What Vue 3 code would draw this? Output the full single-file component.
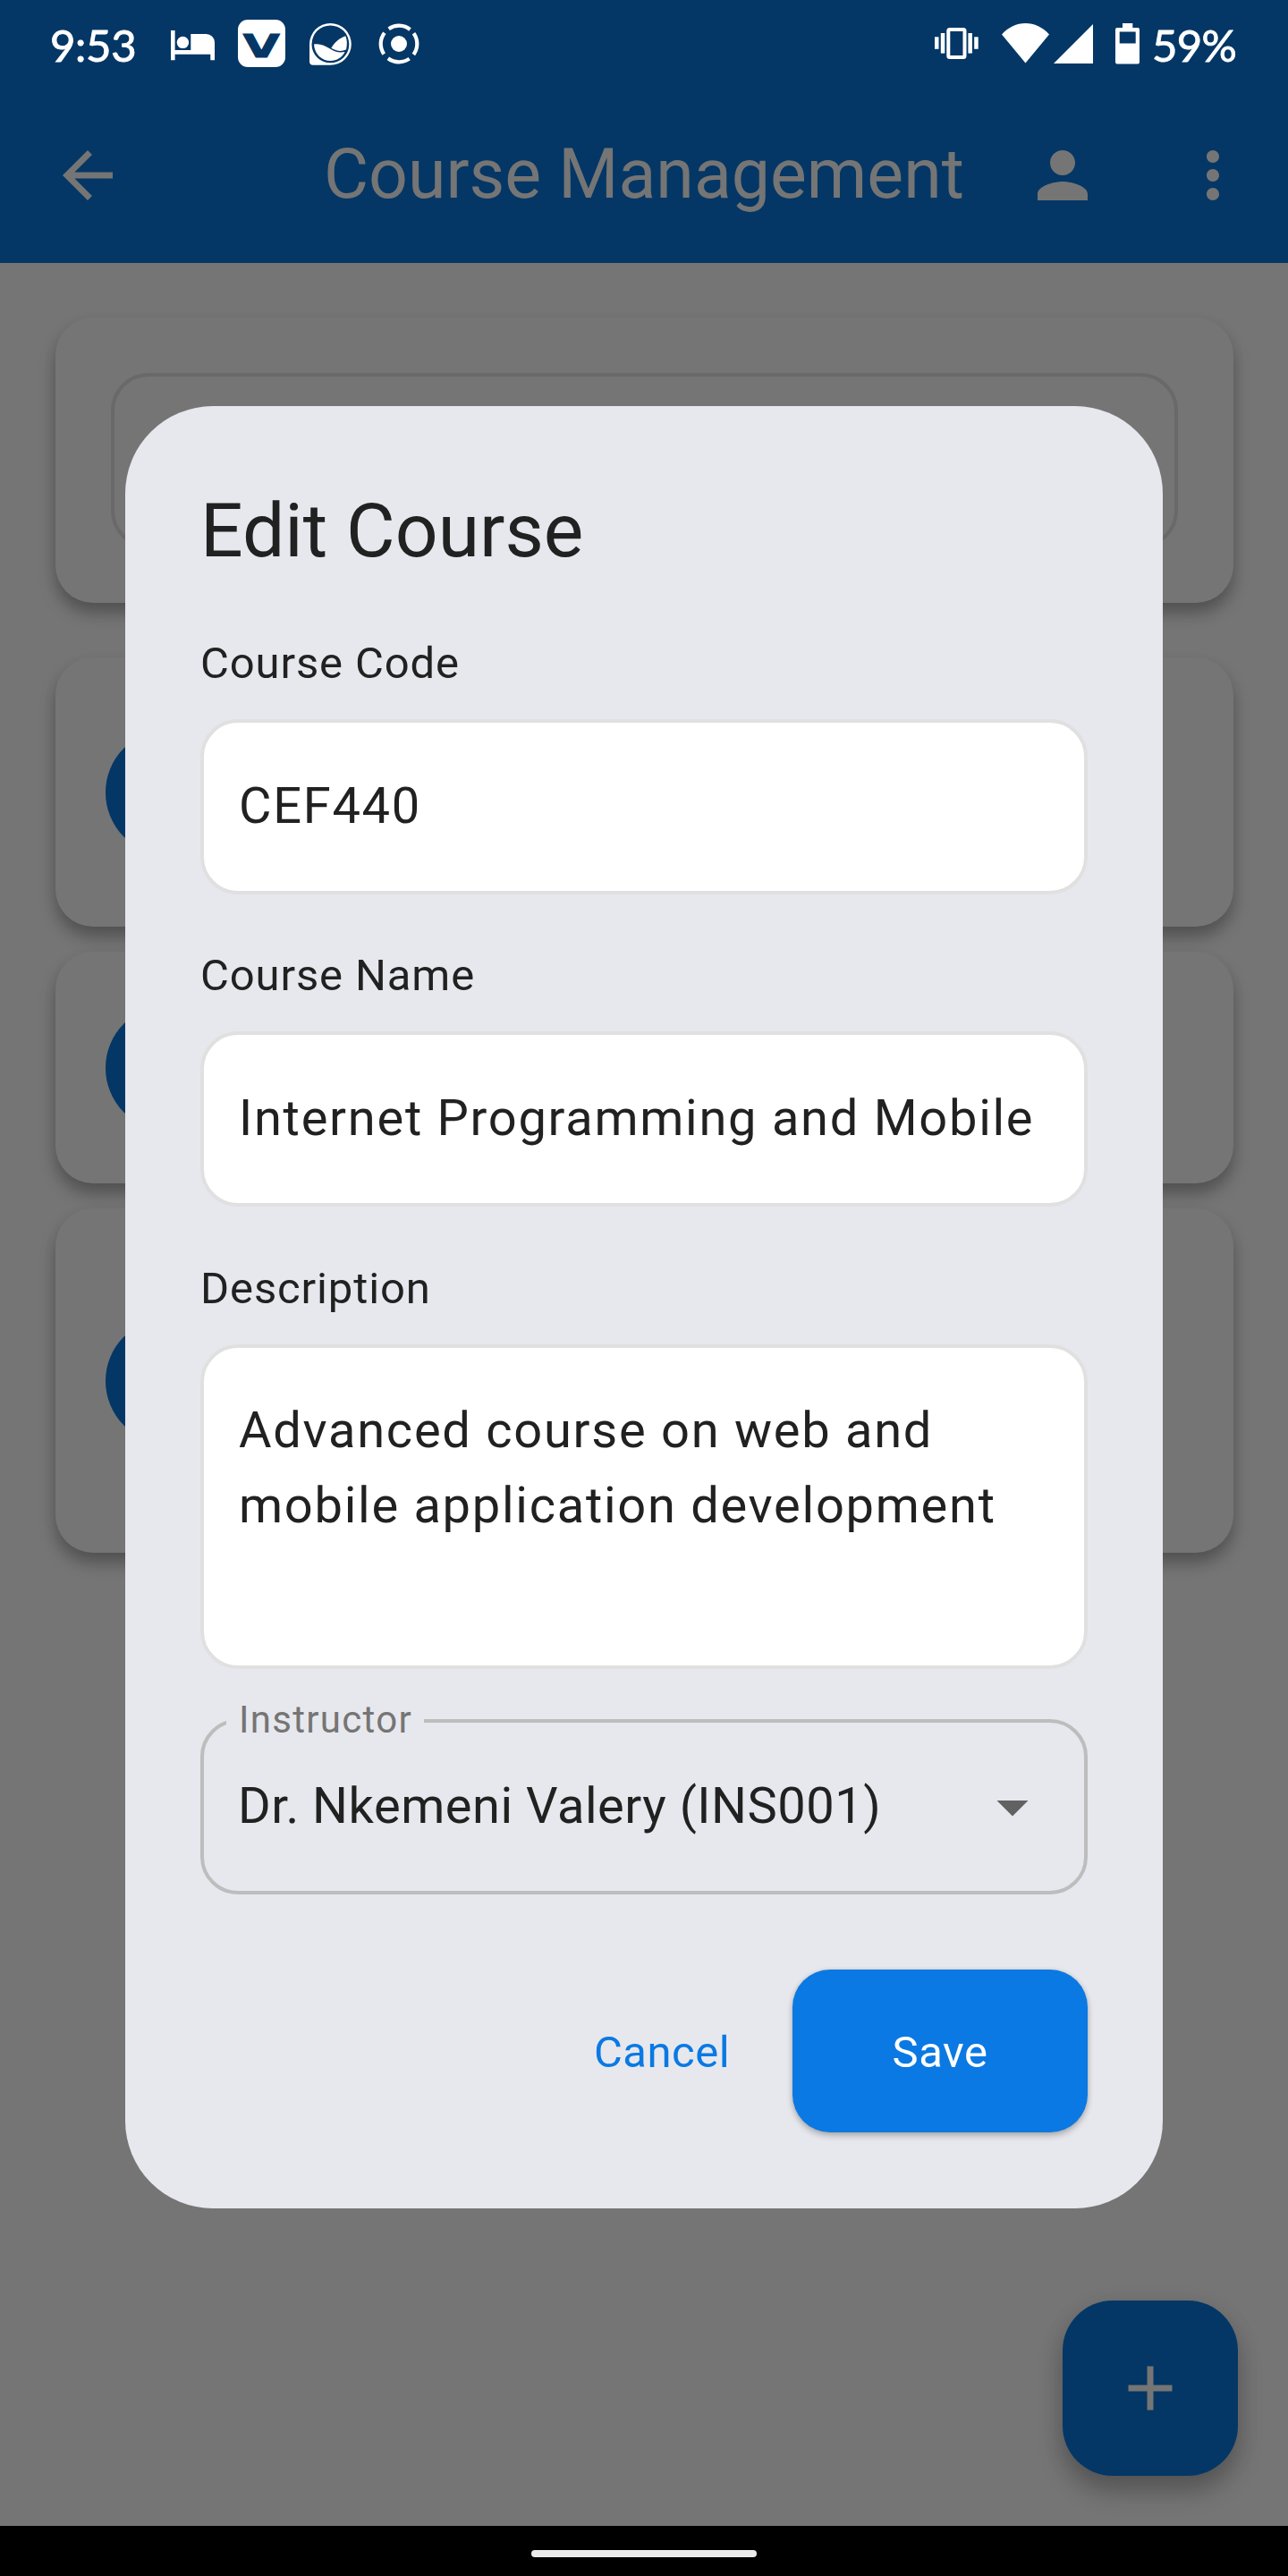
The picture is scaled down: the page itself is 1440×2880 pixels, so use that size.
<script setup>
const courses = [
  { id: 1, size: 'medium' },
  { id: 2, size: 'small' },
  { id: 3, size: 'large' },
]
const fields = [
  { label: 'Course Code', value: 'CEF440' },
  { label: 'Course Name', value: 'Internet Programming and Mobile' },
  { label: 'Description', value: 'Advanced course on web and mobile application development', multiline: true },
]
</script>

<template>
  <div class="screen">
    <header class="top">
      <div class="status">
        <span class="clock">9:53</span>
        <svg class="bed" width="49" height="34" viewBox="0 0 49 34" fill="#fff">
          <path d="M0 0h4.6v22H22.3V4H39.5A9.5 9.5 0 0 1 49 13.5V33.3H44.3V26.7H4.6v6.6H0z" />
          <circle cx="13.4" cy="13.4" r="6.7" />
        </svg>
        <svg class="vapp" width="53" height="53" viewBox="0 0 53 53">
          <rect width="53" height="53" rx="11" fill="#fff" />
          <text x="5.8" y="41.8" font-family="DejaVu Sans" font-weight="700" font-size="36" textLength="41" lengthAdjust="spacingAndGlyphs" fill="#043765" stroke="#043765" stroke-width="1">V</text>
        </svg>
        <svg class="wave" width="47" height="47" viewBox="0 0 47 47">
          <path d="M0 23.4A23.4 23.4 0 1 1 23.4 46.8H4Q0 46.8 0 42.8z" fill="#fff" />
          <circle cx="23.4" cy="23.4" r="20.9" fill="#043765" />
          <path d="M5 23.5C12 22.4 17 25 23 28.6C28.500 32.200 33.500 33.200 39.600 32C36.500 38.200 30.500 42 23.400 42C13.800 42 5.500 34.500 5 23.500z" fill="#fff" />
          <path d="M24.300 27.800C28 21.500 33.500 16.500 40.300 14.300C42.300 19 42.200 24 41 29.500C35.500 32 29.800 31.200 24.300 27.800z" fill="#fff" />
        </svg>
        <svg class="rec" width="46" height="46" viewBox="-23 -23 46 46">
          <circle r="20.300" fill="none" stroke="#fff" stroke-width="4.200" stroke-dasharray="25.200 6.686" transform="rotate(-35.600)" />
          <circle r="9" fill="#fff" />
        </svg>
        <svg class="vibrate" width="49" height="35" viewBox="0 0 49 35" fill="#fff">
          <rect x="15.300" y="2" width="18.200" height="31" rx="1.500" fill="none" stroke="#fff" stroke-width="4" />
          <rect x="0" y="10.300" width="4.500" height="13.500" />
          <rect x="6.800" y="6" width="4.500" height="22.600" />
          <rect x="37.400" y="6" width="4.500" height="22.600" />
          <rect x="44.200" y="10.300" width="4.500" height="13.500" />
        </svg>
        <svg class="wifi" width="53" height="45" viewBox="0 0 53 45" fill="#fff">
          <path d="M26.500 44.500L0 12.500C7.500 4.200 16.500 0 26.500 0S45.500 4.200 53 12.500z" />
        </svg>
        <svg class="signal" width="44" height="44" viewBox="0 0 44 44" fill="#fff"><path d="M0 44H44V0z" /></svg>
        <svg class="battery" width="27" height="46" viewBox="0 0 27 46" fill="#fff">
          <path fill-rule="evenodd" d="M8 0h11.300v5H25q2 0 2 2V43.500q0 2-2 2H2q-2 0-2-2V7q0-2 2-2H8zM4.700 9.400V22.400H22.700V9.400z" />
        </svg>
        <span class="percent">59%</span>
      </div>
      <div class="appbar">
        <svg width="84" height="84" viewBox="0 0 24 24"><path d="M20 11H7.830l5.590-5.590L12 4l-8 8 8 8 1.410-1.410L7.830 13H20v-2z" /></svg>
        <h1>Course Management</h1>
        <svg class="person" width="84" height="84" viewBox="0 0 24 24"><path d="M12 12c2.210 0 4-1.790 4-4s-1.790-4-4-4-4 1.790-4 4 1.790 4 4 4zm0 2c-2.670 0-8 1.340-8 4v2h16v-2c0-2.660-5.330-4-8-4z" /></svg>
        <svg width="84" height="84" viewBox="0 0 24 24"><path d="M12 8c1.100 0 2-.9 2-2s-.9-2-2-2-2 .9-2 2 .9 2 2 2zm0 2c-1.100 0-2 .9-2 2s.9 2 2 2 2-.9 2-2-.9-2-2-2zm0 6c-1.100 0-2 .9-2 2s.9 2 2 2 2-.9 2-2-.9-2-2-2z" /></svg>
      </div>
    </header>

    <main class="page">
      <section class="card search"><div class="searchbox"></div></section>
      <section v-for="c in courses" :key="c.id" class="card course" :class="c.size">
        <span class="avatar"></span>
      </section>
    </main>

    <button class="fab" type="button">
      <svg width="84" height="84" viewBox="0 0 24 24"><path d="M19 13h-6v6h-2v-6H5v-2h6V5h2v6h6v2z" /></svg>
    </button>

    <footer class="nav"><span class="pill"></span></footer>

    <div class="dialog">
      <h2>Edit Course</h2>
      <div v-for="f in fields" :key="f.label" class="field">
        <label>{{ f.label }}</label>
        <div class="input" :class="{ area: f.multiline }">{{ f.value }}</div>
      </div>
      <div class="select">
        <span class="legend">Instructor</span>
        <span class="chosen">Dr. Nkemeni Valery (INS001)</span>
        <svg width="84" height="84" viewBox="0 0 24 24"><path d="M7 10l5 5 5-5z" fill="#616161" /></svg>
      </div>
      <div class="actions">
        <button class="cancel" type="button">Cancel</button>
        <button class="save" type="button">Save</button>
      </div>
    </div>
  </div>
</template>

<style>
html, body { background: #757575; }
</style>

<style scoped>
* { box-sizing: border-box; }
svg { display: block; flex: none; }
button { border: 0; padding: 0; background: none; font: inherit; }
.screen {
  position: relative;
  display: flex;
  flex-direction: column;
  width: 1440px;
  height: 2880px;
  overflow: hidden;
  background: #757575;
  font-family: Roboto, sans-serif;
  color: #212121;
}
.top { height: 294px; background: #043765; flex: none; }
.status {
  display: flex;
  align-items: flex-start;
  height: 98px;
  padding: 0 0 0 56px;
}
.clock, .percent {
  flex: none;
  font: 400 49px/60px Lato, sans-serif;
  color: #fff;
  -webkit-text-stroke: 0.9px #fff;
  white-space: nowrap;
  margin-top: 20px;
}
.clock { width: 135px; letter-spacing: -0.3px; }
.percent { margin-left: 14px; letter-spacing: -0.7px; }
.bed { margin-top: 34px; }
.vapp { margin: 22px 0 0 26px; }
.wave { margin: 26px 0 0 27px; }
.rec { margin: 26px 0 0 30px; }
.vibrate { margin: 31px 0 0 576px; }
.wifi { margin: 26px 0 0 26px; }
.signal { margin: 27px 0 0 5px; }
.battery { margin: 26px 0 0 25px; }
.appbar {
  display: flex;
  align-items: center;
  height: 196px;
  padding: 0 42px 0 56px;
  fill: #757575;
}
.appbar h1 {
  margin: -2px 0 0 222px;
  font-size: 77px;
  font-weight: 400;
  line-height: 98px;
  color: #757575;
  white-space: nowrap;
}
.person { margin: 0 84px 0 auto; }
.page {
  flex: 1;
  display: flex;
  flex-direction: column;
  gap: 28px;
  padding: 61px 61.500px 0;
}
.card {
  flex: none;
  border-radius: 42px;
  background: #757575;
  box-shadow: 0 12px 18px rgba(0, 0, 0, 0.27), 0 6px 16px rgba(0, 0, 0, 0.05);
}
.search { height: 319px; padding: 62px; margin-bottom: 33px; }
.searchbox { height: 196px; border: 4px solid #696969; border-radius: 42px; }
.course { display: flex; align-items: center; padding-left: 56px; }
.medium { height: 301px; }
.small { height: 259px; }
.large { height: 385px; }
.avatar { width: 140px; height: 140px; border-radius: 50%; background: #043765; }
.fab {
  position: absolute;
  left: 1188px;
  top: 2572px;
  width: 196px;
  height: 196px;
  display: grid;
  place-items: center;
  border-radius: 56px;
  background: #043765;
  fill: #757575;
  box-shadow: 0 18px 28px rgba(0, 0, 0, 0.24), 0 6px 28px rgba(0, 0, 0, 0.08);
}
.nav {
  flex: none;
  display: flex;
  justify-content: center;
  height: 56px;
  padding-top: 27px;
  background: #000;
}
.pill { width: 252px; height: 8px; border-radius: 4px; background: #ebebeb; }
.dialog {
  position: absolute;
  left: 140px;
  top: 453.500px;
  width: 1160px;
  height: 2015px;
  padding: 84px;
  border-radius: 98px;
  background: #e7e8ed;
}
.dialog h2 { margin: 0 0 57px; font-size: 84px; font-weight: 400; line-height: 112px; }
.field { margin-bottom: 56.400px; }
.field label {
  display: block;
  height: 70px;
  margin-bottom: 27.200px;
  font-size: 49px;
  line-height: 70px;
  letter-spacing: 0.875px;
}
.input {
  height: 196px;
  padding: 0 39px;
  border: 4px solid #e0e0e0;
  border-radius: 42px;
  background: #fff;
  font-size: 56px;
  line-height: 186px;
  letter-spacing: 1.730px;
  white-space: nowrap;
  overflow: hidden;
}
.area { height: 363px; padding-top: 50px; line-height: 84px; white-space: normal; }
.select {
  position: relative;
  display: flex;
  align-items: center;
  justify-content: space-between;
  height: 196px;
  padding: 0 38px;
  border: 4px solid #bdbdbd;
  border-radius: 42px;
}
.legend {
  position: absolute;
  left: 25px;
  top: -28px;
  padding: 0 13px 0 14px;
  background: #e7e8ed;
  font-size: 42px;
  line-height: 50px;
  letter-spacing: 1.310px;
  color: #757575;
}
.chosen { margin-top: -2px; font-size: 56px; line-height: 84px; letter-spacing: 0.520px; }
.actions { display: flex; justify-content: flex-end; height: 182px; margin-top: 84px; font-size: 49px; }
.cancel, .save { padding-top: 2px; letter-spacing: 0.500px; }
.cancel { width: 236px; margin-right: 28px; color: #0a79e3; }
.save {
  width: 330px;
  border-radius: 42px;
  background: #0a79e3;
  color: #fff;
  box-shadow: 0 4px 7px rgba(0, 0, 0, 0.24), 0 0 5px rgba(0, 0, 0, 0.1);
}
</style>
